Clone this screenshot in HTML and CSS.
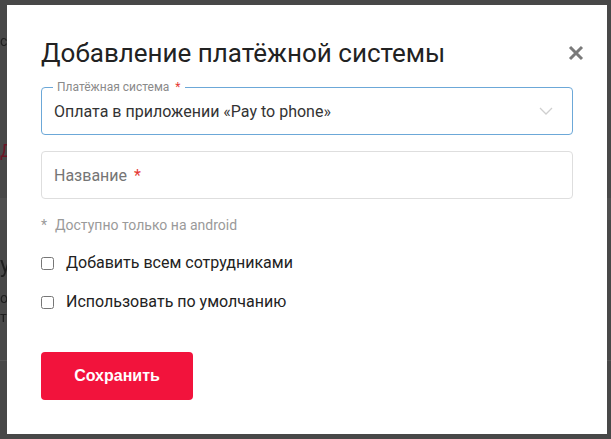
FILE: index.html
```html
<!DOCTYPE html>
<html lang="ru">
<head>
  <meta charset="UTF-8">
  <meta name="viewport" content="width=device-width, initial-scale=1.0">
  <title>Добавление платёжной системы</title>
  <link rel="stylesheet" href="styles.css">
</head>
<body>
  <div class="backdrop">
    <span class="bg-text bg-c">с</span>
    <span class="bg-text bg-d">Д</span>
    <span class="bg-band"></span>
    <span class="bg-text bg-u">у</span>
    <span class="bg-text bg-o">о</span>
    <span class="bg-text bg-t">т</span>
    <span class="bg-line"></span>
  </div>

  <div class="modal">
    <div class="modal-head">
      <h2>Добавление платёжной системы</h2>
      <button class="close" aria-label="Закрыть">
        <svg width="16" height="16" viewBox="0 0 16 16">
          <path d="M2 2 L14 14 M14 2 L2 14" stroke="#7a7a7a" stroke-width="3"/>
        </svg>
      </button>
    </div>

    <div class="field field-active">
      <span class="float-label">Платёжная система <span class="req">*</span></span>
      <span>Оплата в приложении «Pay to phone»</span>
      <svg width="14" height="8" viewBox="0 0 14 8">
        <path d="M1 1 L7 7 L13 1" fill="none" stroke="#cfcfcf" stroke-width="1.3"/>
      </svg>
    </div>

    <div class="field field-input">
      <span class="placeholder">Название <span class="req">*</span></span>
    </div>

    <p class="hint"><span class="hint-star">*</span>Доступно только на android</p>

    <label class="check"><input type="checkbox"> Добавить всем сотрудниками</label>
    <label class="check"><input type="checkbox"> Использовать по умолчанию</label>

    <button class="save">Сохранить</button>
  </div>
</body>
</html>
```

FILE: styles.css
```css
html, body {
  margin: 0;
  padding: 0;
  height: 100%;
  font-family: Roboto, "Liberation Sans", sans-serif;
  background: #484848;
  overflow: hidden;
}
.backdrop {
  position: fixed;
  inset: 0;
}
.bg-text {
  position: absolute;
  left: 0;
  color: #1e1e1e;
  font-size: 14px;
}
.bg-c { top: 33px; }
.bg-d { top: 140px; color: #6a1525; font-size: 18px; }
.bg-u { top: 252px; font-size: 22px; }
.bg-o { top: 290px; }
.bg-t { top: 309px; }
.bg-band {
  position: absolute;
  left: 0;
  right: 0;
  top: 198px;
  height: 22px;
  background: #4f4f4f;
}
.bg-line {
  position: absolute;
  left: 0;
  right: 0;
  top: 360px;
  height: 1px;
  background: #555;
}

.modal {
  position: absolute;
  left: 7px;
  top: 5px;
  width: 600px;
  height: 429px;
  box-sizing: border-box;
  background: #fff;
  padding: 30px 34px 0 34px;
}
.modal-head {
  display: flex;
  justify-content: space-between;
  align-items: center;
  margin-bottom: 16px;
}
.modal-head h2 {
  margin: 0;
  font-weight: 400;
  font-size: 26px;
  line-height: 36px;
  color: #222;
}
.close {
  border: 0;
  background: none;
  padding: 0;
  width: 16px;
  height: 16px;
  margin-right: -11px;
  cursor: pointer;
}
.close svg { display: block; }

.field {
  position: relative;
  box-sizing: border-box;
  display: flex;
  align-items: center;
  justify-content: space-between;
  height: 48px;
  padding: 0 12px;
  border-radius: 4px;
  font-size: 16px;
}
.field-active {
  border: 1px solid #6ca8d8;
  color: #333;
}
.field-active svg { margin-right: 7px; }
.float-label {
  position: absolute;
  left: 11px;
  top: -8px;
  padding: 0 4px;
  background: #fff;
  font-size: 12px;
  line-height: 14px;
  color: #8a8a8a;
}
.req { color: #e53935; margin-left: 3px; }

.field-input {
  border: 1px solid #dedede;
  margin-top: 16px;
  color: #757575;
}

.hint {
  margin: 17px 0 0;
  font-size: 14px;
  color: #9a9a9a;
  line-height: 18px;
}
.hint-star { margin-right: 8px; }

.check {
  display: flex;
  align-items: center;
  font-size: 16px;
  color: #222;
  line-height: 20px;
}
.check:first-of-type { margin-top: 19px; }
.check + .check { margin-top: 19px; }
.check input {
  width: 13px;
  height: 13px;
  margin: 0 12px 0 0;
}

.save {
  display: block;
  margin-top: 40px;
  width: 152px;
  height: 48px;
  border: 0;
  border-radius: 4px;
  background: #f2133c;
  color: #fff;
  font-family: "Liberation Sans", Arial, sans-serif;
  font-weight: 700;
  font-size: 16px;
}
```
